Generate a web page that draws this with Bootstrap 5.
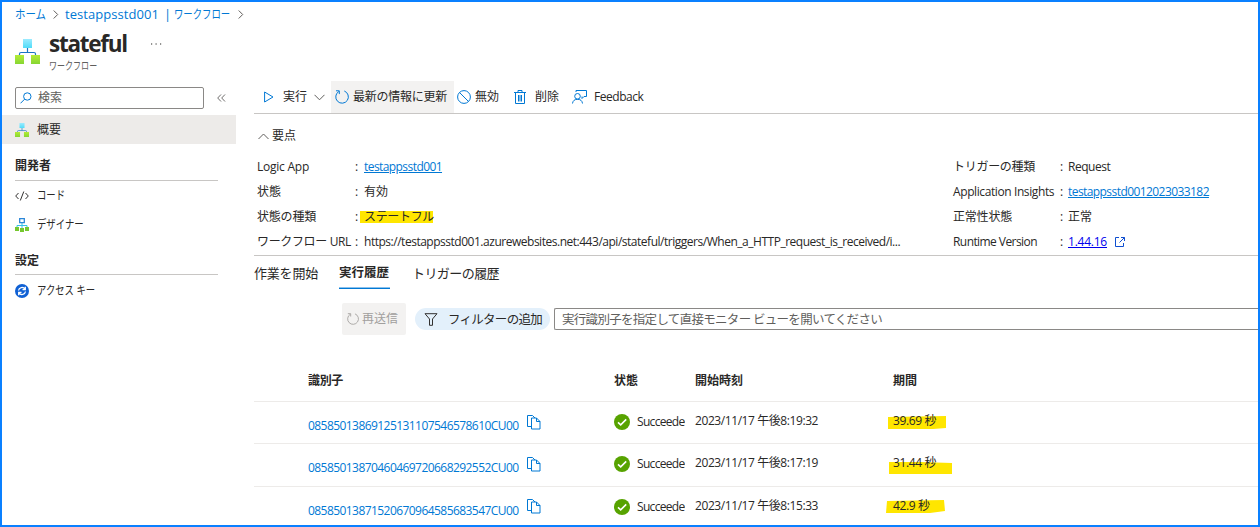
<!DOCTYPE html>
<html lang="ja">
<head>
<meta charset="utf-8">
<meta name="viewport" content="width=device-width, initial-scale=1">
<title>stateful - ワークフロー</title>
<link href="https://cdn.jsdelivr.net/npm/bootstrap@5.3.0/dist/css/bootstrap.min.css" rel="stylesheet">
<script src="https://cdn.jsdelivr.net/npm/bootstrap@5.3.0/dist/js/bootstrap.bundle.min.js"></script>
<style>
body{font:12px/16px "Open Sans","Noto Sans CJK JP",sans-serif;color:#292827;background:#fff}
.portal{height:527px;border:2px solid #0a80ff;white-space:nowrap}
svg{display:block;flex:none;fill:none}
a{color:#0078d4}
/* Latin text and narrow kana */
.en{letter-spacing:-.48px}
.en-s{letter-spacing:-.57px}
.kana{display:inline-block;transform:scaleX(.78);transform-origin:0 50%}
.crumbs{height:24px;padding-left:13px;color:#0078d4;font-size:13px}
.crumb-home{width:38px}.crumb-home .kana{transform:scaleX(.87);font-size:12px}
.crumb-app{width:99px;letter-spacing:.05px}
.crumb-sep{width:10px}
.crumb-flow{width:64px}.crumb-flow .kana{font-size:12px}
.head{height:56px;padding:5px 0 0 13px}
.head h1{font-size:22.5px;font-weight:700;line-height:25px;letter-spacing:-1.25px;width:101px;margin:0}
.subtitle{font-size:11px;line-height:16px;margin-top:2px;color:#605e5c}
.subtitle .kana{transform:scaleX(.73)}
.side{width:234px;padding-top:5px}
.search{width:189px;height:22px;margin-left:13px;border:1px solid #8a8886;border-radius:2px;padding-left:4px;color:#605e5c}
.search svg{margin-right:6px}
.side-row{height:29px;padding-left:13px}
.side-row svg{margin-right:8px}
.side-row.active{background:#edebe9}
.side-title{font-weight:700;margin-left:13px;width:203px;height:29px;border-bottom:1px solid #c8c6c4}
.main{margin-left:18px;width:1004px}
.bar{height:32px;margin-top:-1px}
.cmd{height:32px}
.cmd.hot{background:#f3f2f1;width:123px;padding-left:4px}
.rule{height:1px;background:#c8c6c4}
.info-row{height:25px}
.hl{background:#ffe600}
.tabs span{font-size:13px}
.tab-on{font-weight:700;height:32px;padding-top:1px;border-bottom:1px solid #0078d4;box-shadow:inset 0 -1px #8cc1ec;width:51px}
.resend{width:64px;height:32px;background:#f3f2f1;color:#a19f9d;padding-left:5px;border-radius:2px}
.pill{width:135px;height:22px;border-radius:11px;background:#e3f0fb;padding-left:9px}
.runid{height:22px;border:1px solid #8a8886;border-right:0;border-radius:2px 0 0 2px;padding:1px 0 0 7px;color:#605e5c;font-size:12.5px;letter-spacing:-.7px}
.run{display:grid;grid-template-columns:54px 306px 81px 198px 1fr;border-bottom:1px solid #edebe9}
.run .state{width:71px;overflow:hidden}
.run .en{letter-spacing:-.56px}
.run .state .en{letter-spacing:-.68px}
.run .date{letter-spacing:-.42px}
.run .mark-box{position:relative;z-index:0;letter-spacing:-.36px}
.mark-box svg{position:absolute;z-index:-1}
</style>
</head>
<body>
<svg width="0" height="0" class="position-absolute">
  <defs>
    <linearGradient id="gBlue" x2="0" y2="1"><stop stop-color="#9cebff"/><stop offset="1" stop-color="#50dcf8"/></linearGradient>
    <linearGradient id="gGreen" x2="0" y2="1"><stop stop-color="#b4ec36"/><stop offset="1" stop-color="#86d633"/></linearGradient>
    <symbol id="flow" viewBox="0 0 25 25"><path d="M12.5 8v5.500M4.500 17v-2q0-1.500 1.500-1.500h13q1.500 0 1.500 1.500v2" stroke="#1b74c4" stroke-width="1.200"/><path d="M8 0h9v9H8z" fill="url(#gBlue)"/><path d="M0 16h9v9H0zM16 16h9v9h-9z" fill="url(#gGreen)"/></symbol>
    <symbol id="refresh" viewBox="0 0 14 14"><path d="M9.300 1A6.300 6.300 0 1 1 3.800 1.500M1 .8h3.300v3.300" stroke="currentColor"/></symbol>
    <symbol id="copy" viewBox="0 0 14 15"><path d="M4.500 11.500h-4v-11h5l2.500 2.500M4.500 3h5l3.500 3.500v7.500H4.500zM9.500 3v3.500H13" stroke="#0078d4"/></symbol>
    <symbol id="ok" viewBox="0 0 16 16"><circle cx="8" cy="8" r="8" fill="#57a300"/><path d="M4 8.300l2.700 2.600L12.200 5.400" stroke="#fff" stroke-width="1.600"/></symbol>
  </defs>
</svg>
<div class="portal overflow-hidden">
  <nav class="crumbs d-flex align-items-center">
    <span class="crumb-home"><span class="kana">ホーム</span></span>
    <svg width="12" height="9"><path d="M.7.500l4 4-4 4" stroke="#605e5c"/></svg>
    <span class="crumb-app">testappsstd001</span><span class="crumb-sep">|</span>
    <span class="crumb-flow"><span class="kana">ワークフロー</span></span>
    <svg width="8" height="9"><path d="M.7.500l4 4-4 4" stroke="#605e5c"/></svg>
  </nav>
  <header class="head d-flex">
    <svg width="25" height="25" style="margin:8px 9px 0 0"><use href="#flow"/></svg>
    <div><h1>stateful</h1><div class="subtitle"><span class="kana">ワークフロー</span></div></div>
    <svg width="12" height="3" style="margin-top:12px"><path d="M1 1h1.200M5.500 1h1.200M10 1h1.200" stroke="#292827" stroke-width="1.200"/></svg>
  </header>
  <div class="d-flex">
    <aside class="side">
      <div class="d-flex align-items-center">
        <div class="search d-flex align-items-center"><svg width="12" height="12"><circle cx="7.300" cy="4.500" r="3.700" stroke="#0078d4"/><path d="M4.600 7.200L.5 11.300" stroke="#0078d4"/></svg>検索</div>
        <svg width="9" height="8" style="margin-left:13px"><path d="M4 .5L.7 4 4 7.500M8 .5L4.700 4 8 7.500" stroke="#605e5c" stroke-width=".9"/></svg>
      </div>
      <div class="side-row active d-flex align-items-center" style="margin-top:6px"><svg width="14" height="14"><use href="#flow"/></svg>概要</div>
      <div class="side-title d-flex align-items-center" style="margin-top:8px">開発者</div>
      <div class="side-row d-flex align-items-center"><svg width="14" height="10" stroke="#323130"><path d="M3.500 2L.7 5l2.800 3M10.500 2l2.800 3-2.800 3M8.800.500L5.300 9.500"/></svg><span class="kana">コード</span></div>
      <div class="side-row d-flex align-items-center"><svg width="14" height="14"><path d="M7 5v5M2 10V7.500h10V10" stroke="#35c2e5"/><path d="M4.700.7h4.600v4H4.700z" stroke="#2a86d8" stroke-width="1.300"/><path d="M0 9h4v4H0zM5 10h4v4H5zM10 9h4v4h-4z" fill="#76c82f"/></svg><span class="kana">デザイナー</span></div>
      <div class="side-title d-flex align-items-center" style="margin-top:7px;padding-top:1px">設定</div>
      <div class="side-row d-flex align-items-center" style="height:31px"><svg width="14" height="14"><circle cx="7" cy="7" r="7" fill="#0f60d4"/><path d="M3.500 6.500A3.600 3.600 0 0 1 10 5M10.500 7.500A3.600 3.600 0 0 1 4 9M10.300 2.700v2.800H7.500M3.700 11.300V8.500h2.800" stroke="#fff" stroke-width="1.300"/></svg><span class="kana">アクセス キー</span></div>
    </aside>
    <main class="main">
      <div class="bar d-flex align-items-center">
        <svg width="10" height="12" style="margin:0 9px 0 10px"><path d="M.6 1v10L9 6z" stroke="#0078d4"/></svg>
        <span>実行</span>
        <svg width="11" height="7" style="margin:0 6px 0 7px"><path d="M.5.800l5 5 5-5" stroke="#605e5c"/></svg>
        <div class="cmd hot d-flex align-items-center"><svg width="14" height="14" style="margin-right:4px;color:#0078d4"><use href="#refresh"/></svg><span style="letter-spacing:-.25px">最新の情報に更新</span></div>
        <svg width="14" height="14" style="margin:0 4px 0 3px" stroke="#0078d4"><circle cx="7" cy="7" r="6.400"/><path d="M2.500 2.500l9 9"/></svg><span>無効</span>
        <svg width="12" height="14" style="margin:0 9px 0 15px" stroke="#0078d4"><path d="M0 2.500h12M4 2.500v-2h4v2M1.500 2.500v11h9v-11M4.500 5v6.500M6 5v6.500M7.500 5v6.500"/></svg><span>削除</span>
        <svg width="16" height="14" style="margin:0 6px 0 13px" stroke="#0078d4"><circle cx="5.500" cy="6.300" r="2.800"/><path d="M.5 13.500Q1 9.300 5.500 9.300T10.500 13.500M4 2V.500h10.500v6H12l-2 2V6.500"/></svg><span class="en">Feedback</span>
      </div>
      <div class="rule"></div>
      <div class="d-flex align-items-center" style="height:40px;padding:4px 0 0 4px"><svg width="11" height="7" style="margin-right:3px"><path d="M.5 6l5-5 5 5" stroke="#605e5c"/></svg>要点</div>
      <div class="d-flex" style="height:100px">
        <div style="width:699px">
          <div class="info-row d-flex align-items-center"><span class="en" style="width:98px;margin-left:3px;letter-spacing:-.24px">Logic App</span><span style="width:9px">:</span><a href="#" class="en-s">testappsstd001</a></div>
          <div class="info-row d-flex align-items-center"><span style="width:98px;margin-left:3px">状態</span><span style="width:9px">:</span>有効</div>
          <div class="info-row d-flex align-items-center"><span style="width:98px;margin-left:3px;letter-spacing:-.2px">状態の種類</span><span style="width:5px">:</span><span class="hl" style="width:73px;height:12px;line-height:12px;padding-left:4px;letter-spacing:-.34px">ステートフル</span></div>
          <div class="info-row d-flex align-items-center"><span style="width:98px;margin-left:3px;letter-spacing:-.35px">ワークフロー URL</span><span style="width:9px">:</span><span class="en">https://testappsstd001.azurewebsites.net:443/api/stateful/triggers/When_a_HTTP_request_is_received/i...</span></div>
        </div>
        <div>
          <div class="info-row d-flex align-items-center"><span style="width:107px;letter-spacing:-.29px">トリガーの種類</span><span style="width:8px">:</span><span class="en">Request</span></div>
          <div class="info-row d-flex align-items-center"><span style="width:107px;letter-spacing:-.4px">Application Insights</span><span style="width:8px">:</span><a href="#" class="en-s">testappsstd0012023033182</a></div>
          <div class="info-row d-flex align-items-center"><span style="width:107px;letter-spacing:-.2px">正常性状態</span><span style="width:8px">:</span>正常</div>
          <div class="info-row d-flex align-items-center"><span class="en-s" style="width:107px">Runtime Version</span><span style="width:8px">:</span><a href="#" style="letter-spacing:-.23px;color:#0000ee">1.44.16</a><svg width="10" height="10" style="margin-left:8px" stroke="#0f4fd0"><path d="M4 .500H.5v9h8V6M6 .500h3.500V4M9.500.500L4.500 5.500"/></svg></div>
        </div>
      </div>
      <div class="rule" style="margin-top:1px"></div>
      <div class="tabs d-flex" style="height:47px;padding-top:1px">
        <span class="d-flex align-items-center" style="width:85px;height:31px;letter-spacing:-.2px">作業を開始</span>
        <span class="tab-on d-flex align-items-center" style="font-size:12.500px">実行履歴</span>
        <span class="d-flex align-items-center" style="height:31px;margin-left:22px;letter-spacing:-.57px">トリガーの履歴</span>
      </div>
      <div class="d-flex align-items-center" style="height:32px;padding-left:88px">
        <div class="resend d-flex align-items-center"><svg width="12" height="12" style="margin-right:3px"><use href="#refresh"/></svg>再送信</div>
        <div class="pill d-flex align-items-center" style="margin-left:9px;padding-top:1px"><svg width="14" height="13" style="margin-right:10px"><path d="M1 .700h12L8.500 6v6.300h-3V6z" stroke="#323130"/></svg><span style="font-size:12.500px;letter-spacing:-.72px">フィルターの追加</span></div>
        <div class="runid flex-fill d-flex align-items-center" style="margin-left:4px">実行識別子を指定して直接モニター ビューを開いてください</div>
      </div>
      <div class="run fw-bold" style="height:67px;padding-top:38px"><span></span><span style="letter-spacing:-.34px">識別子</span><span>状態</span><span>開始時刻</span><span>期間</span></div>
      <div class="run" style="height:42px;padding-top:11px">
        <span></span>
        <div class="d-flex" style="padding-top:5px"><a href="#" class="en text-decoration-none" style="width:219px">08585013869125131107546578610CU00</a><svg width="14" height="15" style="margin-top:-3px"><use href="#copy"/></svg></div>
        <div class="state d-flex align-items-center" style="height:18px"><svg width="16" height="16" style="margin-right:7px"><use href="#ok"/></svg><span class="en">Succeeded</span></div>
        <span class="date">2023/11/17 午後8:19:32</span>
        <span class="mark-box"><svg width="60" height="13" style="left:-6px;top:3px"><path d="M1 1L59 0V12L46 13H1z" fill="#ffe600"/></svg>39.69 秒</span>
      </div>
      <div class="run" style="height:43px;padding-top:11px">
        <span></span>
        <div class="d-flex" style="padding-top:5px"><a href="#" class="en text-decoration-none" style="width:219px">08585013870460469720668292552CU00</a><svg width="14" height="15" style="margin-top:-3px"><use href="#copy"/></svg></div>
        <div class="state d-flex align-items-center" style="height:18px"><svg width="16" height="16" style="margin-right:7px"><use href="#ok"/></svg><span class="en">Succeeded</span></div>
        <span class="date">2023/11/17 午後8:17:19</span>
        <span class="mark-box"><svg width="64" height="13" style="left:-4px;top:7px"><path d="M0 0H31L63 1V12H0z" fill="#ffe600"/></svg>31.44 秒</span>
      </div>
      <div class="run" style="height:43px;padding-top:11px">
        <span></span>
        <div class="d-flex" style="padding-top:5px"><a href="#" class="en text-decoration-none" style="width:219px">08585013871520670964585683547CU00</a><svg width="14" height="15" style="margin-top:-4px"><use href="#copy"/></svg></div>
        <div class="state d-flex align-items-center" style="height:17px"><svg width="16" height="16" style="margin-right:7px"><use href="#ok"/></svg><span class="en">Succeeded</span></div>
        <span class="date">2023/11/17 午後8:15:33</span>
        <span class="mark-box"><svg width="60" height="13" style="left:-7px;top:2px"><path d="M1 1L58 0L59 11L44 13H0z" fill="#ffe600"/></svg>42.9 秒</span>
      </div>
    </main>
  </div>
</div>
</body>
</html>
